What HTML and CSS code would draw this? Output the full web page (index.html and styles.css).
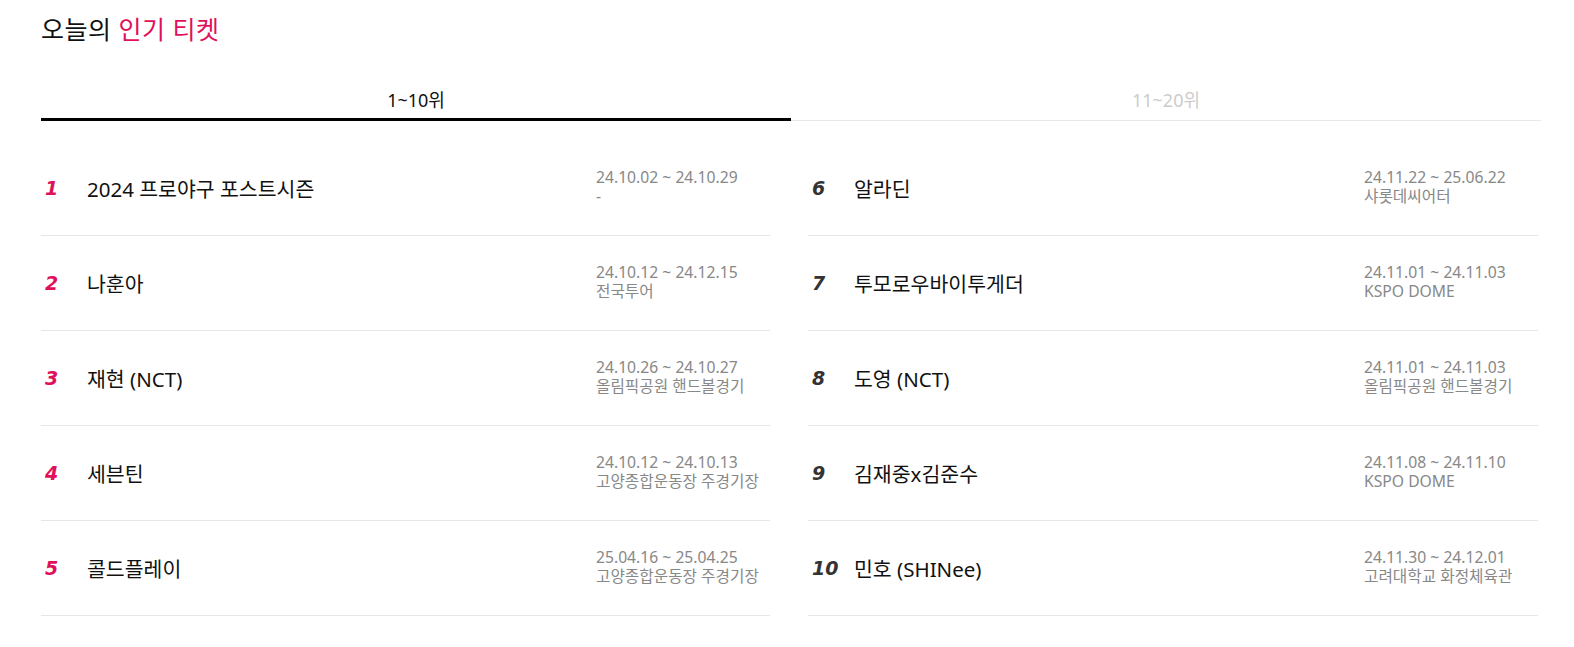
FILE: index.html
```html
<!DOCTYPE html>
<html lang="ko">
<head>
    <meta charset="utf-8">
    <title>오늘의 인기 티켓</title>
    <link rel="stylesheet" href="styles.css">
</head>
<body>
    <div class="ranking">
        <h2 class="ranking-title">오늘의 <em>인기 티켓</em></h2>

        <div class="tabs">
            <button type="button" class="tab active">1~10위</button>
            <button type="button" class="tab">11~20위</button>
        </div>

        <div class="rank-grid">
            <ul class="rank-list">
                <li class="rank-item top">
                    <span class="rank-num">1</span>
                    <span class="rank-name">2024 프로야구 포스트시즌</span>
                    <div class="rank-info">
                        <p class="rank-date">24.10.02 ~ 24.10.29</p>
                        <p class="rank-place">-</p>
                    </div>
                </li>
                <li class="rank-item top">
                    <span class="rank-num">2</span>
                    <span class="rank-name">나훈아</span>
                    <div class="rank-info">
                        <p class="rank-date">24.10.12 ~ 24.12.15</p>
                        <p class="rank-place">전국투어</p>
                    </div>
                </li>
                <li class="rank-item top">
                    <span class="rank-num">3</span>
                    <span class="rank-name">재현 (NCT)</span>
                    <div class="rank-info">
                        <p class="rank-date">24.10.26 ~ 24.10.27</p>
                        <p class="rank-place">올림픽공원 핸드볼경기</p>
                    </div>
                </li>
                <li class="rank-item top">
                    <span class="rank-num">4</span>
                    <span class="rank-name">세븐틴</span>
                    <div class="rank-info">
                        <p class="rank-date">24.10.12 ~ 24.10.13</p>
                        <p class="rank-place">고양종합운동장 주경기장</p>
                    </div>
                </li>
                <li class="rank-item top">
                    <span class="rank-num">5</span>
                    <span class="rank-name">콜드플레이</span>
                    <div class="rank-info">
                        <p class="rank-date">25.04.16 ~ 25.04.25</p>
                        <p class="rank-place">고양종합운동장 주경기장</p>
                    </div>
                </li>
            </ul>
            <ul class="rank-list">
                <li class="rank-item">
                    <span class="rank-num">6</span>
                    <span class="rank-name">알라딘</span>
                    <div class="rank-info">
                        <p class="rank-date">24.11.22 ~ 25.06.22</p>
                        <p class="rank-place">샤롯데씨어터</p>
                    </div>
                </li>
                <li class="rank-item">
                    <span class="rank-num">7</span>
                    <span class="rank-name">투모로우바이투게더</span>
                    <div class="rank-info">
                        <p class="rank-date">24.11.01 ~ 24.11.03</p>
                        <p class="rank-place">KSPO DOME</p>
                    </div>
                </li>
                <li class="rank-item">
                    <span class="rank-num">8</span>
                    <span class="rank-name">도영 (NCT)</span>
                    <div class="rank-info">
                        <p class="rank-date">24.11.01 ~ 24.11.03</p>
                        <p class="rank-place">올림픽공원 핸드볼경기</p>
                    </div>
                </li>
                <li class="rank-item">
                    <span class="rank-num">9</span>
                    <span class="rank-name">김재중x김준수</span>
                    <div class="rank-info">
                        <p class="rank-date">24.11.08 ~ 24.11.10</p>
                        <p class="rank-place">KSPO DOME</p>
                    </div>
                </li>
                <li class="rank-item">
                    <span class="rank-num">10</span>
                    <span class="rank-name">민호 (SHINee)</span>
                    <div class="rank-info">
                        <p class="rank-date">24.11.30 ~ 24.12.01</p>
                        <p class="rank-place">고려대학교 화정체육관</p>
                    </div>
                </li>
            </ul>
        </div>
    </div>
</body>
</html>
```

FILE: styles.css
```css
body {
    margin: 0;
    font-family: "Noto Sans", "Noto Sans CJK KR", sans-serif;
    color: #111;
    background: #fff;
}
.ranking {
    width: 1500px;
    margin: 0 0 0 41px;
    padding-top: 11px;
}
.ranking-title {
    margin: 0;
    font-size: 25px;
    font-weight: 400;
    line-height: 36px;
    letter-spacing: 0.5px;
}
.ranking-title em {
    font-style: normal;
    color: #e0105a;
}
.tabs {
    display: flex;
    margin-top: 38px;
    border-bottom: 1px solid #e8e8e8;
}
.tab {
    flex: 1;
    height: 36px;
    padding: 0 0 6px;
    border: 0;
    background: none;
    font-family: inherit;
    font-size: 18px;
    color: #ccc;
    margin-bottom: -1px;
    border-bottom: 3px solid transparent;
    cursor: pointer;
}
.tab.active {
    color: #111;
    border-bottom-color: #000;
}
.rank-grid {
    display: grid;
    grid-template-columns: 729px 730px;
    column-gap: 38px;
    margin-top: 20px;
}
.rank-list {
    list-style: none;
    margin: 0;
    padding: 0;
}
.rank-item {
    display: flex;
    align-items: center;
    height: 94px;
    border-bottom: 1px solid #e6e6e6;
}
.rank-num {
    width: 46px;
    padding-left: 4px;
    box-sizing: border-box;
    font-family: "DejaVu Sans", sans-serif;
    font-size: 19px;
    font-weight: 700;
    font-style: italic;
    color: #333;
}
.rank-item.top .rank-num {
    color: #e0105a;
}
.rank-name {
    flex: 1;
    font-size: 20.5px;
}
.rank-info {
    width: 174px;
    font-size: 15.7px;
    line-height: 19px;
    color: #888;
    margin-top: -2px;
}
.rank-info p {
    margin: 0;
}
```
